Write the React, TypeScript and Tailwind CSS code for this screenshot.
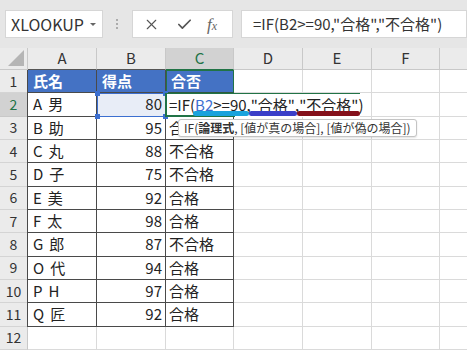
import { Check, X } from "lucide-react";

const FONT = "font-['Noto_Sans_CJK_JP','Noto_Sans',sans-serif]";

const COLS = [
  { key: "A", w: "w-[69px]" },
  { key: "B", w: "w-[69px]" },
  { key: "C", w: "w-[68px]" },
  { key: "D", w: "w-[69px]" },
  { key: "E", w: "w-[69px]" },
  { key: "F", w: "w-[68px]" },
  { key: "G", w: "w-[69px]" },
];

const ROWS: [string, number, string][] = [
  ["A 男", 80, ""],
  ["B 助", 95, "合格"],
  ["C 丸", 88, "不合格"],
  ["D 子", 75, "不合格"],
  ["E 美", 92, "合格"],
  ["F 太", 98, "合格"],
  ["G 郎", 87, "不合格"],
  ["O 代", 94, "合格"],
  ["P H", 97, "合格"],
  ["Q 匠", 92, "合格"],
];

function Mark({
  children,
  color,
}: {
  children: React.ReactNode;
  color: string;
}) {
  return (
    <span className="relative">
      {children}
      <span
        className={`absolute -left-[2px] -right-[2px] bottom-[-4px] h-[5px] rounded-full ${color}`}
      />
    </span>
  );
}

function TopBar() {
  return (
    <div className="flex h-[48px] items-start bg-[#e6e6e6] pt-[10px]">
      <div className="ml-[5px] flex h-[28px] w-[98px] items-center justify-between border border-[#d6d6d6] bg-white pl-[5px] pr-[6px]">
        <span className="text-[16px] text-[#333]">XLOOKUP</span>
        <span className="h-0 w-0 border-x-[3px] border-t-[3px] border-x-transparent border-t-[#666]" />
      </div>
      <div className="ml-[13px] mt-[9px] flex w-[3px] flex-col gap-[2px]">
        <span className="h-[2px] w-[2px] rounded-full bg-[#999]" />
        <span className="h-[2px] w-[2px] rounded-full bg-[#999]" />
        <span className="h-[2px] w-[2px] rounded-full bg-[#999]" />
      </div>
      <div className="ml-[13px] flex h-[28px] w-[101px] items-center border border-[#d6d6d6] bg-white pl-[10px] text-[#555]">
        <X size={17} strokeWidth={1.6} />
        <Check size={17} strokeWidth={2.4} className="ml-[16px]" />
        <span className="ml-[14px] font-['Liberation_Serif',serif] text-[17px] italic leading-none text-[#666]">
          f<span className="text-[12px]">x</span>
        </span>
      </div>
      <div className="ml-[8px] flex h-[28px] flex-1 items-center border border-[#d6d6d6] bg-white pl-[11px] text-[15px] text-[#333]">
        =IF(B2&gt;=90,"合格","不合格")
      </div>
    </div>
  );
}

function ColumnHeader() {
  return (
    <div className="flex h-[22px] bg-[#ebebeb]">
      <div className="relative w-[28px] shrink-0 border-r border-b border-[#c8c8c8]">
        <span className="absolute bottom-[3px] right-[3px] h-[16px] w-[16px] bg-[#b5b5b5] [clip-path:polygon(100%_0,100%_100%,0_100%)]" />
      </div>
      {COLS.map((c, i) => (
        <div
          key={c.key}
          className={`${c.w} flex shrink-0 items-center justify-center border-r border-b text-[15px] ${
            c.key === "C"
              ? "border-[#c8c8c8] border-b-[#217346] bg-[#d2d2d2] text-[#217346]"
              : i < 3
                ? "border-[#c8c8c8] border-b-[#555] text-[#333]"
                : "border-[#c8c8c8] text-[#333]"
          }`}
        >
          {c.key === "G" ? "" : c.key}
        </div>
      ))}
    </div>
  );
}

function RowHead({ n, active }: { n: number; active?: boolean }) {
  return (
    <div
      className={`flex w-[28px] shrink-0 items-center justify-center border-b border-r text-[14px] ${
        active
          ? "border-[#c8c8c8] border-r-[#217346] bg-[#d2d2d2] text-[#217346]"
          : "border-[#d4d4d4] border-r-[#c8c8c8] bg-[#ebebeb] text-[#333]"
      }`}
    >
      {n}
    </div>
  );
}

function EmptyCells({ from }: { from: number }) {
  return (
    <>
      {COLS.slice(from).map((c) => (
        <div
          key={c.key}
          className={`${c.w} shrink-0 border-r border-b border-[#dadada] bg-white`}
        />
      ))}
    </>
  );
}

function Name({ value }: { value: string }) {
  const [first, last] = value.split(" ");
  return (
    <span className="flex gap-[6px]">
      <span>{first}</span>
      <span>{last}</span>
    </span>
  );
}

const dark = "border-r border-b border-[#4a4a4a]";

export default function App() {
  return (
    <div
      className={`${FONT} h-[353px] w-[467px] overflow-hidden bg-white text-[#222]`}
    >
      <TopBar />
      <ColumnHeader />

      <div className="relative">
        {/* row 1 */}
        <div className="flex h-[23.33px]">
          <RowHead n={1} />
          <div
            className={`w-[69px] shrink-0 ${dark} flex items-center bg-[#4472c4] pl-[5px] text-[15px] font-bold text-white shadow-[-1px_0_0_#4a4a4a]`}
          >
            氏名
          </div>
          <div
            className={`w-[69px] shrink-0 ${dark} flex items-center bg-[#4472c4] pl-[5px] text-[15px] font-bold text-white`}
          >
            得点
          </div>
          <div className="flex w-[68px] shrink-0 items-center border border-[#217346] border-b-[#2f5a3c] bg-[#4472c4] pl-[4px] text-[15px] font-bold text-white">
            合否
          </div>
          <EmptyCells from={3} />
        </div>

        {ROWS.map(([name, score, result], i) => {
          const n = i + 2;
          const editing = n === 2;
          return (
            <div key={n} className="flex h-[23.33px]">
              <RowHead n={n} active={editing} />
              <div
                className={`w-[69px] shrink-0 ${dark} flex items-center pl-[5px] text-[15px] shadow-[-1px_0_0_#4a4a4a]`}
              >
                <Name value={name} />
              </div>
              <div
                className={`w-[69px] shrink-0 ${dark} flex items-center justify-end pr-[3px] text-[15px] ${
                  editing ? "bg-[#e8edf7]" : ""
                }`}
              >
                {score}
              </div>
              <div
                className={`w-[68px] shrink-0 ${dark} flex items-center pl-[3px] text-[15px]`}
              >
                {result}
              </div>
              <EmptyCells from={3} />
            </div>
          );
        })}

        <div className="flex h-[23.33px]">
          <RowHead n={12} />
          <EmptyCells from={0} />
        </div>

        {/* B2 reference range */}
        <div className="absolute left-[97px] top-[22.5px] h-[24.5px] w-[69px] border-[1.5px] border-[#3c6fd0]">
          <span className="absolute -left-[3px] -top-[3px] h-[5px] w-[5px] bg-[#3c6fd0]" />
          <span className="absolute -right-[3px] -top-[3px] h-[5px] w-[5px] bg-[#3c6fd0]" />
          <span className="absolute -bottom-[3px] -left-[3px] h-[5px] w-[5px] bg-[#3c6fd0]" />
          <span className="absolute -bottom-[3px] -right-[3px] h-[5px] w-[5px] bg-[#3c6fd0]" />
        </div>

        {/* in-cell editor for C2 */}
        <div className="absolute left-[165px] top-[23px] flex h-[24px] w-[195px] items-center border-b-2 border-l-2 border-t border-[#217346] border-r-0 bg-white pl-[2px] text-[15px] leading-none whitespace-nowrap">
          <span className="absolute -bottom-[2px] left-[68px] right-0 h-[2px] bg-white" />
          <span>=IF(</span>
          <Mark color="bg-[#19a3dc]">
            <span className="text-[#3c6fd0]">B2</span>&gt;=90
          </Mark>
          <span>,</span>
          <Mark color="bg-[#3b3fc8]">"合格"</Mark>
          <span>,</span>
          <Mark color="bg-[#84101a]">"不合格"</Mark>
          <span>)</span>
        </div>

        {/* argument tooltip */}
        <div className="absolute left-[178px] top-[49px] flex h-[18px] items-center rounded-[3px] border border-[#c4c4c4] bg-white px-[5px] text-[12px] leading-none whitespace-nowrap text-[#333] shadow-[0_1px_2px_rgba(0,0,0,0.12)]">
          IF(<span className="font-bold">論理式</span>, [値が真の場合], [値が偽の場合])
        </div>
      </div>
    </div>
  );
}
